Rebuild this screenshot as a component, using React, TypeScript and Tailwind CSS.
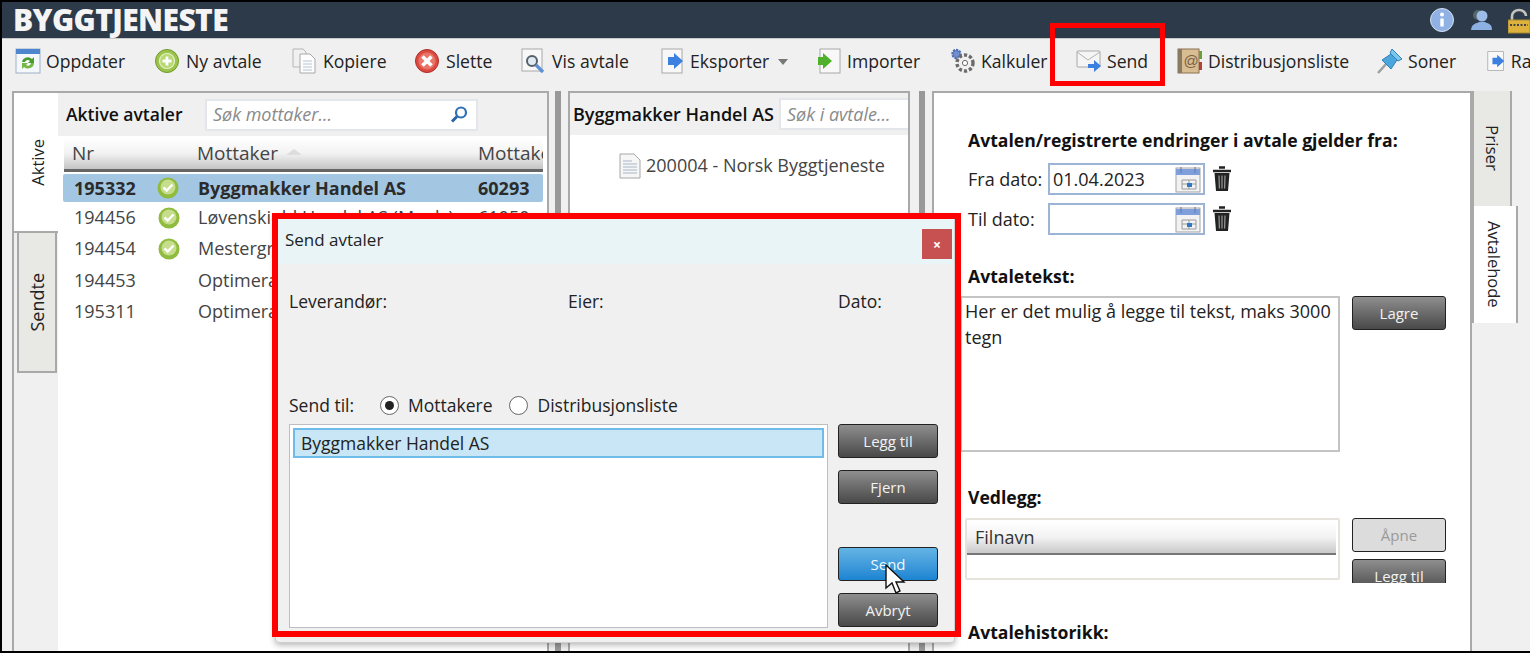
import type { ReactNode } from "react";

const tools = [
	{ label: "Oppdater", icon: "refresh", width: "w-[140px]" },
	{ label: "Ny avtale", icon: "plus", width: "w-[137px]" },
	{ label: "Kopiere", icon: "copy", width: "w-[123px]" },
	{ label: "Slette", icon: "delete", width: "w-[106px]" },
	{ label: "Vis avtale", icon: "view", width: "w-[140px]" },
	{ label: "Eksporter", icon: "export", width: "w-[157px]" },
	{ label: "Importer", icon: "import", width: "w-[132px]" },
	{ label: "Kalkuler", icon: "gear", width: "w-[126px]" },
	{ label: "Send", icon: "mail", width: "w-[101px]" },
	{ label: "Distribusjonsliste", icon: "book", width: "w-[200px]" },
	{ label: "Soner", icon: "pin", width: "w-[110px]" },
	{ label: "Rapport", icon: "export", width: "w-[90px]" },
];

const rows = [
	{ nr: "194456", ok: true, name: "Løvenskiold Handel AS (Moelv)", no: "61050" },
	{ nr: "194454", ok: true, name: "Mestergruppen Bygg AS", no: "" },
	{ nr: "194453", ok: false, name: "Optimera AS", no: "" },
	{ nr: "195311", ok: false, name: "Optimera AS", no: "" },
];

function ToolIcon({ name }: { name: string }) {
	if (name === "refresh")
		return (
			<svg width="26" height="26" viewBox="0 0 26 26">
				<rect x="1" y="1" width="24" height="24" fill="#f4f8fc" stroke="#9fb0c4" />
				<rect x="1" y="1" width="24" height="5" fill="#4d86cf" />
				<path d="M7 14a6 6 0 0 1 10-3l2-2v6h-6l2-2a3 3 0 0 0-5 1z" fill="#4a9c2f" />
				<path d="M19 15a6 6 0 0 1-10 4l-2 2v-6h6l-2 2a3 3 0 0 0 5-2z" fill="#74b743" />
			</svg>
		);
	if (name === "plus")
		return (
			<svg width="26" height="26" viewBox="0 0 26 26" className="-ml-[1px] mr-[1px]">
				<circle cx="13" cy="13" r="11.5" fill="#9cc44c" stroke="#6f9a2c" />
				<circle cx="13" cy="13" r="7.5" fill="#b7d872" stroke="#e6f2c8" strokeWidth="1.2" />
				<path d="M13 8.5v9M8.5 13h9" stroke="#fff" strokeWidth="2.8" />
			</svg>
		);
	if (name === "copy")
		return (
			<svg width="26" height="26" viewBox="0 0 26 26">
				<path d="M1 1h10l3 3v15H1z" fill="#f0f0f0" stroke="#b5b5b5" />
				<path d="M8 6h10l5 5v14H8z" fill="#fdfdfd" stroke="#a8a8a8" />
				<path d="M11 13h9M11 16h9M11 19h9M11 22h9" stroke="#b8c4d4" />
			</svg>
		);
	if (name === "delete")
		return (
			<svg width="26" height="26" viewBox="0 0 26 26" className="-ml-[1px] mr-[1px]">
				<circle cx="13" cy="13" r="11.5" fill="#dc4a42" stroke="#ad2c26" />
				<circle cx="13" cy="13" r="8.5" fill="#e97468" />
				<path d="M8.5 8.5l9 9M17.5 8.5l-9 9" stroke="#fff" strokeWidth="3.6" />
			</svg>
		);
	if (name === "view")
		return (
			<svg width="26" height="26" viewBox="0 0 26 26">
				<rect x="1" y="1" width="20" height="22" fill="#f8f8f8" stroke="#a8a8a8" />
				<circle cx="11" cy="13" r="5" fill="#dfeaf2" stroke="#55606a" strokeWidth="2" />
				<path d="M15 17l7 7" stroke="#5f8fd6" strokeWidth="3.4" />
			</svg>
		);
	if (name === "export")
		return (
			<svg width="24" height="26" viewBox="0 0 24 26">
				<rect x="1" y="1" width="20" height="24" fill="#f8f8f8" stroke="#a8a8a8" />
				<path d="M7 9h6V5l9 8-9 8v-4H7z" fill="#3b7fe0" />
			</svg>
		);
	if (name === "import")
		return (
			<svg width="24" height="26" viewBox="0 0 24 26">
				<rect x="2" y="1" width="20" height="24" fill="#f8f8f8" stroke="#a8a8a8" />
				<path d="M0 9h5V5l9 8-9 8v-4H0z" fill="#4fb02c" />
			</svg>
		);
	if (name === "gear")
		return (
			<svg width="26" height="26" viewBox="0 0 26 26">
				<circle cx="6.5" cy="6" r="4" fill="#6f8fd0" stroke="#4c6cb0" strokeDasharray="2 1" strokeWidth="2.4" />
				<circle cx="15" cy="15" r="8" fill="#f1f1f1" stroke="#6b6b6b" strokeDasharray="3.2 2" strokeWidth="3.4" />
				<circle cx="15" cy="15" r="2.6" fill="#fff" stroke="#6b6b6b" />
			</svg>
		);
	if (name === "mail")
		return (
			<svg width="26" height="26" viewBox="0 0 26 26">
				<rect x="1" y="3" width="23" height="16" rx="1" fill="#f5f5f5" stroke="#a8a8a8" />
				<path d="M1 4l11 8 12-8" fill="none" stroke="#b0b0b0" />
				<path d="M12 16h6v-4l7 6-7 6v-4h-6z" fill="#3b7fe0" />
			</svg>
		);
	if (name === "book")
		return (
			<svg width="26" height="26" viewBox="0 0 26 26">
				<rect x="1" y="1" width="21" height="24" fill="#d9bd92" stroke="#8a7150" />
				<rect x="1" y="1" width="4" height="24" fill="#8a7a63" />
				<rect x="22" y="3" width="3" height="8" fill="#6aa03a" />
				<rect x="22" y="14" width="3" height="8" fill="#b2423a" />
				<text x="6.5" y="18" fontSize="15" fill="#7a6244" fontFamily="Liberation Sans, sans-serif">@</text>
			</svg>
		);
	if (name === "pin")
		return (
			<svg width="26" height="26" viewBox="0 0 26 26">
				<path d="M1 25l9-10" stroke="#a0a0a0" strokeWidth="2.6" />
				<path d="M5 12l9-6 6 6-6 9z" fill="#4ba6de" stroke="#2f7fb8" />
				<path d="M15 1l10 10-4 2-8-8z" fill="#7cc7ee" stroke="#2f7fb8" />
			</svg>
		);
	return null;
}

function OkIcon() {
	return (
		<svg width="22" height="22" viewBox="0 0 22 22" className="shrink-0">
			<circle cx="11" cy="11" r="10.5" fill="#8fbb3f" />
			<circle cx="11" cy="10" r="7.5" fill="#c6dd8b" />
			<path d="M6.5 10.5l3.2 3 5.8-6" fill="none" stroke="#fff" strokeWidth="2.4" />
		</svg>
	);
}

function DocIcon() {
	return (
		<svg width="22" height="26" viewBox="0 0 22 26">
			<path d="M1 1h14l6 6v18H1z" fill="#f6f6f6" stroke="#a6a6a6" />
			<path d="M4 8h9M4 11h14M4 14h14M4 17h14M4 20h14" stroke="#a9b6c9" />
		</svg>
	);
}

function SearchIcon() {
	return (
		<svg width="20" height="20" viewBox="0 0 20 20">
			<circle cx="12" cy="7.5" r="5" fill="#fff" stroke="#2f6fb4" strokeWidth="2.2" />
			<path d="M8 11.5l-5 5" stroke="#2a64a8" strokeWidth="3" />
		</svg>
	);
}

function CalendarIcon() {
	return (
		<svg width="26" height="27" viewBox="0 0 26 27">
			<rect x="1" y="2" width="24" height="24" fill="#f2f2f2" stroke="#a5a5a5" />
			<rect x="1" y="3" width="24" height="6" fill="#7f9fdc" />
			<path d="M6 1v6M20 1v6" stroke="#5a78b0" />
			<path d="M7 14h14v9H7zM14 14v9M7 18h14" fill="none" stroke="#9a9a9a" />
			<rect x="12" y="17" width="5" height="4" fill="#2e78c8" />
		</svg>
	);
}

function TrashIcon() {
	return (
		<svg width="20" height="26" viewBox="0 0 20 26">
			<path d="M7 1.5h6M1 5h18" stroke="#222" strokeWidth="2.6" />
			<path d="M2.5 7h15l-1.5 18H4z" fill="#222" />
			<path d="M7 9.5l.4 13M10 9.5v13M13 9.5l-.4 13" stroke="#999" strokeWidth="1.2" />
		</svg>
	);
}

function Btn({
	children,
	className = "from-[#8f8f8f] to-[#494949] text-[#f2f2f2]",
	width = "w-[100px]",
}: {
	children: ReactNode;
	className?: string;
	width?: string;
}) {
	return (
		<div
			className={`flex h-[34px] shrink-0 items-center justify-center rounded-[3px] border border-[#222] bg-gradient-to-b text-[15px] ${width} ${className}`}
		>
			{children}
		</div>
	);
}

function Radio({ checked, label }: { checked?: boolean; label: string }) {
	return (
		<div className="flex items-center gap-[9px]">
			<div className="flex size-[19px] items-center justify-center rounded-full border border-[#666] bg-white">
				{checked && <div className="size-[9px] rounded-full bg-[#222]" />}
			</div>
			<span>{label}</span>
		</div>
	);
}

function SendDialog() {
	return (
		<div className="absolute top-[213px] left-[273px] flex h-[428px] w-[680px] flex-col overflow-hidden rounded-b-[4px] border border-[#cfcfcf] bg-[#f0f0f0] text-[17.5px] text-[#222] shadow-[0_2px_6px_rgba(0,0,0,0.3)]">
			<div className="flex h-[48px] shrink-0 justify-between bg-[#e9f4f7] pr-[2px] pl-[9px]">
				<span className="self-center text-[17px]">Send avtaler</span>
				<div className="mt-[13px] flex h-[30px] w-[30px] items-center justify-center bg-[#c75050] text-[14px] font-bold text-white">
					×
				</div>
			</div>
			<div className="flex pt-[25px] pl-[13px] leading-[24px]">
				<span className="w-[279px]">Leverandør:</span>
				<span className="w-[270px]">Eier:</span>
				<span>Dato:</span>
			</div>
			<div className="mt-[80px] flex items-center pl-[13px] leading-[24px]">
				<span className="w-[91px]">Send til:</span>
				<Radio checked label="Mottakere" />
				<div className="ml-[17px]">
					<Radio label="Distribusjonsliste" />
				</div>
			</div>
			<div className="mt-[7px] flex gap-[10px] pl-[13px]">
				<div className="h-[204px] w-[539px] border border-[#bdbdc4] bg-white p-[3px]">
					<div className="flex h-[30px] items-center border-2 border-[#6fbcea] bg-[#c8e6f5] pl-[6px]">
						Byggmakker Handel AS
					</div>
				</div>
				<div className="relative flex flex-col">
					<Btn>Legg til</Btn>
					<div className="mt-[12px]">
						<Btn>Fjern</Btn>
					</div>
					<div className="mt-[43px]">
						<Btn className="from-[#63b4e4] to-[#1a84d2] text-[#f2f8fc]">Send</Btn>
					</div>
					<div className="mt-[12px]">
						<Btn>Avbryt</Btn>
					</div>
					<svg
						width="22"
						height="30"
						viewBox="0 0 22 30"
						className="absolute top-[140px] left-[47px]"
					>
						<path
							d="M1 1v23l6-5 4 10 4-2-4-9h8z"
							fill="#fff"
							stroke="#111"
							strokeWidth="1.4"
						/>
					</svg>
				</div>
			</div>
		</div>
	);
}

export default function App() {
	return (
		<div className="relative h-[653px] w-[1530px] overflow-hidden border-y-2 border-l-2 border-black bg-[#f0f0f0] font-['Open_Sans',sans-serif] text-[#222]">
			<header className="flex h-[36px] items-center justify-between bg-[#2d3a4a] pl-[11px]">
				<span className="font-['Open_Sans',sans-serif] text-[30px] leading-none font-extrabold tracking-[-0.6px] text-[#f4f4f4]">
					BYGGTJENESTE
				</span>
				<div className="flex items-center gap-[15px]">
					<svg width="24" height="24" viewBox="0 0 24 24">
						<circle cx="12" cy="12" r="11.5" fill="#8fb1e3" stroke="#d5e2f5" />
						<circle cx="12" cy="6.5" r="2" fill="#fff" />
						<path d="M12 10.5v8" stroke="#fff" strokeWidth="3.4" />
					</svg>
					<svg width="24" height="24" viewBox="0 0 24 24">
						<circle cx="9" cy="7" r="5" fill="#566" />
						<circle cx="13" cy="8" r="5.5" fill="#9dbde8" />
						<path d="M2 22c1-7 5-6 8-8h6c3 2 7 1 7 8z" fill="#8cb0e2" />
					</svg>
					<svg width="22" height="26" viewBox="0 0 22 26" className="mt-[2px]">
						<path d="M4 12V8a7 6 0 0 1 14 0" fill="none" stroke="#c5c5bd" strokeWidth="2.6" />
						<rect x="0" y="12" width="22" height="13" fill="#dcb23c" stroke="#a8892c" />
						<path d="M2 17h18" stroke="#444" strokeWidth="2" strokeDasharray="2 1.5" />
					</svg>
				</div>
			</header>

			<div className="flex h-[53px] items-center overflow-hidden border-t border-[#c8c8c8] pb-[8px] pl-[13px] text-[17.6px] whitespace-nowrap">
				{tools.map((t) => (
					<div key={t.label} className={`flex shrink-0 items-center gap-[5px] ${t.width}`}>
						<ToolIcon name={t.icon} />
						<span>{t.label}</span>
						{t.label === "Eksporter" && (
							<span className="mt-[2px] ml-[4px] border-x-[5px] border-t-[6px] border-x-transparent border-t-[#777]" />
						)}
					</div>
				))}
			</div>

			<main className="flex h-[561px] text-[18px]">
				{/* venstre: avtaleliste */}
				<section className="ml-[10px] flex w-[537px] shrink-0 border-t-2 border-r-2 border-[#a9a9a9]">
					<div className="flex w-[46px] shrink-0 flex-col items-start border-l-2 border-[#a9a9a9] bg-[#f0f0f0]">
						<div className="flex h-[140px] w-[46px] items-center justify-center border-b-2 border-[#a9a9a9] bg-white pl-[2px] text-[16.5px] [writing-mode:vertical-rl]">
							<span className="rotate-180">Aktive</span>
						</div>
						<div className="ml-[3px] flex h-[140px] w-[40px] items-center justify-center border-2 border-t-0 border-[#a9a9a9] bg-[#e8e8e4] text-[18px] [writing-mode:vertical-rl]">
							<span className="rotate-180">Sendte</span>
						</div>
					</div>
					<div className="flex min-w-0 flex-1 flex-col overflow-hidden bg-white">
						<div className="flex h-[43px] shrink-0 items-center bg-[#f0f0f0] pl-[8px]">
							<span className="w-[139px] text-[17.5px] font-semibold text-[#111]">Aktive avtaler</span>
							<div className="flex h-[32px] w-[273px] items-center justify-between border-2 border-[#e3e6ea] bg-white pr-[7px] pl-[6px] text-[18px] text-[#8a8a8a] italic">
								<span>Søk mottaker...</span>
								<SearchIcon />
							</div>
						</div>
						<div className="mt-[2px] ml-[6px] flex h-[34px] w-[479px] shrink-0 items-center overflow-hidden border-b-[3px] border-[#666] bg-gradient-to-b from-white via-[#f2f2f2] to-[#c4c4c4] pl-[8px] text-[19px] whitespace-nowrap text-[#444]">
							<span className="w-[125px] shrink-0">Nr</span>
							<span className="flex w-[281px] shrink-0 items-center gap-[8px]">
								Mottaker
								<span className="mb-[4px] border-x-[8px] border-b-[6px] border-x-transparent border-b-[#ddd]" />
							</span>
							<span>Mottaker</span>
						</div>
						<div className="mt-[2px] ml-[5px] flex h-[28px] w-[480px] shrink-0 items-center rounded-[2px] bg-[#a3c7e2] pl-[11px] font-bold text-[#2b2b2b]">
							<span className="w-[83px]">195332</span>
							<div className="w-[41px]">
								<OkIcon />
							</div>
							<span className="w-[280px]">Byggmakker Handel AS</span>
							<span>60293</span>
						</div>
						<div>
							{rows.map((r) => (
								<div
									key={r.nr}
									className="flex h-[31.3px] items-center pl-[16px] whitespace-nowrap text-[#444]"
								>
									<span className="w-[84px]">{r.nr}</span>
									<div className="w-[40px]">{r.ok && <OkIcon />}</div>
									<span className="w-[280px]">{r.name}</span>
									<span>{r.no}</span>
								</div>
							))}
						</div>
					</div>
				</section>
				<div className="ml-[5px] flex w-[8px] shrink-0 justify-center">
					<div className="w-[6px] bg-[#999]" />
				</div>

				{/* midten: avtaler */}
				<section className="ml-[6px] flex w-[342px] shrink-0 flex-col border-x-2 border-t-2 border-[#a9a9a9] bg-white">
					<div className="flex h-[42px] shrink-0 items-center overflow-hidden bg-[#f0f0f0] pl-[3px] whitespace-nowrap">
						<span className="w-[206px] text-[18px] font-semibold text-[#111]">Byggmakker Handel AS</span>
						<div className="flex h-[32px] flex-1 items-center overflow-hidden border-y-2 border-l-2 border-[#e3e6ea] bg-white pl-[6px] text-[18px] text-[#8a8a8a] italic">
							Søk i avtale...
						</div>
					</div>
					<div className="flex items-center gap-[5px] pt-[17px] pl-[49px] text-[#444]">
						<DocIcon />
						<span>200004 - Norsk Byggtjeneste</span>
					</div>
				</section>
				<div className="ml-[8px] flex w-[8px] shrink-0 justify-center">
					<div className="w-[6px] bg-[#999]" />
				</div>

				{/* høyre: avtalehode */}
				<section className="ml-[6px] h-full w-[540px] shrink-0 overflow-hidden border-x-2 border-t-2 border-[#a9a9a9] bg-white pl-[34px] text-[#222]">
					<h2 className="mt-[35px] text-[17.6px] leading-[24px] font-bold text-[#111]">
						Avtalen/registrerte endringer i avtale gjelder fra:
					</h2>
					<div className="mt-[11px] flex h-[32px] items-center">
						<span className="mt-[1px] w-[80px]">Fra dato:</span>
						<div className="flex h-[32px] w-[157px] items-center justify-between border-2 border-[#9db5d4] pr-[2px] pl-[3px]">
							<span className="mt-[1px]">01.04.2023</span>
							<CalendarIcon />
						</div>
						<div className="ml-[7px]">
							<TrashIcon />
						</div>
					</div>
					<div className="mt-[8px] flex h-[32px] items-center">
						<span className="mt-[1px] w-[80px]">Til dato:</span>
						<div className="flex h-[32px] w-[157px] items-center justify-end border-2 border-[#9db5d4] pr-[2px]">
							<CalendarIcon />
						</div>
						<div className="ml-[7px]">
							<TrashIcon />
						</div>
					</div>
					<h2 className="mt-[29px] text-[17.6px] leading-[24px] font-bold text-[#111]">Avtaletekst:</h2>
					<div className="-ml-[8px] flex gap-[12px] pt-[8px]">
						<div className="h-[156px] w-[380px] border-2 border-[#c4c4c4] px-[3px] leading-[26px]">
							Her er det mulig å legge til tekst, maks 3000 tegn
						</div>
						<Btn width="w-[94px]">Lagre</Btn>
					</div>
					<h2 className="mt-[33px] text-[17.6px] leading-[24px] font-bold text-[#111]">Vedlegg:</h2>
					<div className="-ml-[3px] flex pt-[9px]">
						<div className="h-[62px] w-[375px] rounded-[2px] border-2 border-[#e6e3dc] pt-[2px] pr-[2px]">
							<div className="flex h-[33px] items-center border-b-2 border-[#777] bg-gradient-to-b from-white via-[#f2f2f2] to-[#c9c9c9] pl-[8px] text-[18px] text-[#333]">
								Filnavn
							</div>
						</div>
						<div className="ml-[12px] flex h-[65px] flex-col gap-[7px] overflow-hidden">
							<Btn width="w-[94px]" className="from-[#dcdcdc] to-[#dcdcdc] text-[#9a9a9a]">
								Åpne
							</Btn>
							<Btn width="w-[94px]">Legg til</Btn>
						</div>
					</div>
					<h2 className="mt-[37px] text-[17.6px] leading-[24px] font-bold text-[#111]">Avtalehistorikk:</h2>
				</section>

				<div className="flex w-[58px] shrink-0 flex-col items-start">
					<div className="flex h-[115px] w-[40px] items-center justify-center border-y-2 border-r-2 border-[#a9a9a9] bg-[#e8e8e4] text-[17px] [writing-mode:vertical-rl]">
						Priser
					</div>
					<div className="flex h-[117px] w-[46px] items-center justify-center border-y-2 border-r-2 border-[#a9a9a9] bg-white pr-[3px] text-[16.5px] [writing-mode:vertical-rl]">
						Avtalehode
					</div>
				</div>
			</main>

			<SendDialog />

			{/* markeringer */}
			<div className="pointer-events-none absolute top-[21px] left-[1048px] h-[63px] w-[115px] border-[5px] border-[#f00]" />
			<div className="pointer-events-none absolute top-[211px] left-[270px] h-[424px] w-[689px] border-[6px] border-[#f00]" />
		</div>
	);
}
